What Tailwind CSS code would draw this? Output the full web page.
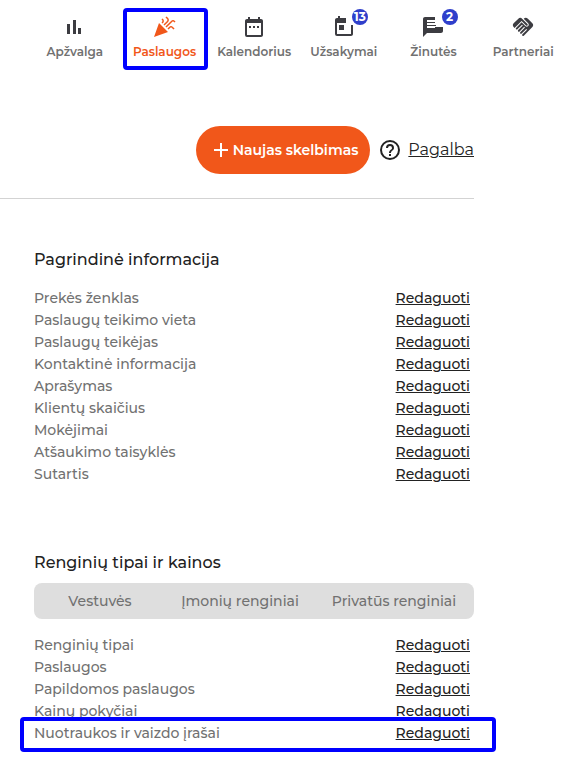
<!DOCTYPE html>
<html lang="lt">
<head>
    <meta charset="UTF-8">
    <meta name="viewport" content="width=device-width, initial-scale=1.0">
    <title>Paslaugos</title>
    <script src="https://cdn.jsdelivr.net/npm/@tailwindcss/browser@4"></script>
</head>
<body class="bg-white font-[Montserrat,Inter,sans-serif] text-[#222]">
    <!-- Navigation -->
    <nav class="grid grid-cols-6 pl-[30px] pt-[15px] text-xs leading-[18px] font-semibold text-[#717171]">
        <a href="#" class="flex flex-col items-center gap-1">
            <svg class="w-6 h-6 text-[#3c3c41]" viewBox="0 0 24 24" fill="currentColor"><path d="M4 9h3v10H4zM10 5h3v14h-3zM15 13h3v6h-3z"/></svg>
            Apžvalga
        </a>
        <a href="#" class="relative flex flex-col items-center gap-1 text-[#f1571a]">
            <span class="absolute -top-[7px] -bottom-[9px] left-[3px] right-px border-4 border-[#0000ff] rounded-sm"></span>
            <svg class="w-6 h-6" viewBox="0 0 24 24" fill="currentColor"><path d="M2 22l14-5-9-9zm12.530-9.470l5.590-5.590c.49-.49 1.280-.49 1.770 0l.59.59 1.060-1.060-.59-.59c-1.070-1.070-2.820-1.070-3.890 0l-5.590 5.590zm-4.470-5.650l-.59.59 1.060 1.060.59-.59c1.070-1.070 1.070-2.820 0-3.890l-.59-.59-1.060 1.070.59.59c.48.48.48 1.280 0 1.760m7 5l-1.590 1.590 1.060 1.060 1.590-1.590c.49-.49 1.280-.49 1.770 0l1.610 1.610 1.060-1.060-1.610-1.610c-1.080-1.070-2.820-1.070-3.890 0m-2-6l-3.590 3.590 1.060 1.060 3.590-3.590c1.070-1.070 1.070-2.820 0-3.890l-1.590-1.590-1.060 1.060 1.590 1.590c.48.49.48 1.290 0 1.770"/></svg>
            Paslaugos
        </a>
        <a href="#" class="flex flex-col items-center gap-1">
            <svg class="w-6 h-6 text-[#3c3c41]" viewBox="0 0 24 24" fill="currentColor"><path d="M7 11h2v2H7zm14-5v14c0 1.100-.9 2-2 2H5a2 2 0 0 1-2-2V6c0-1.100.9-2 2-2h1V2h2v2h8V2h2v2h1c1.100 0 2 .9 2 2M5 8v12h14V8zm10 5h2v-2h-2zm-4 0h2v-2h-2z"/></svg>
            Kalendorius
        </a>
        <a href="#" class="relative flex flex-col items-center gap-1">
            <svg class="w-6 h-6 text-[#3c3c41]" viewBox="0 0 24 24" fill="currentColor"><path d="M21 10v9c0 1.100-.9 2-2 2H5a2 2 0 0 1-2-2V5c0-1.100.9-2 2-2h1V1h2v2h6v5H5v11h14v-9zM7 10h5v5H7z"/></svg>
            <span class="absolute -top-[6px] left-[53px] w-4 h-4 rounded-full bg-[#2f3fcb] ring-2 ring-white text-xs leading-4 font-bold text-white text-center">13</span>
            Užsakymai
        </a>
        <a href="#" class="relative flex flex-col items-center gap-1">
            <svg class="w-6 h-6 text-[#3c3c41]" viewBox="0 0 24 24" fill="currentColor"><path d="M4 2h10v3H6v2h8v1H6v2h9v1H6v2h8v-1h8v4c0 1.100-.9 2-2 2H6l-4 4V4c0-1.100.9-2 2-2"/></svg>
            <span class="absolute -top-[6px] left-[53px] w-4 h-4 rounded-full bg-[#2f3fcb] ring-2 ring-white text-xs leading-4 font-bold text-white text-center">2</span>
            Žinutės
        </a>
        <a href="#" class="flex flex-col items-center gap-1">
            <svg class="w-6 h-6 text-[#3c3c41]" viewBox="0 0 24 24" fill="currentColor"><path d="M16.480 10.410c-.39.39-1.040.39-1.430 0l-4.470-4.460-7.050 7.040-.66-.63a3 3 0 0 1 0-4.240l4.240-4.240a3 3 0 0 1 4.240 0L16.480 9c.39.39.39 1.020 0 1.410m.7-2.130c.78.78.78 2.050 0 2.830-1.270 1.270-2.610.22-2.830 0l-3.760-3.760-5.570 5.570c-.39.39-.39 1.020 0 1.410s1.020.39 1.420 0l4.620-4.620.71.710-4.620 4.620c-.39.39-.39 1.020 0 1.410s1.020.39 1.420 0l4.620-4.620.71.710-4.620 4.620c-.39.39-.39 1.020 0 1.410s1.020.39 1.410 0l4.620-4.620.71.710-4.620 4.620c-.39.39-.39 1.020 0 1.410s1.020.39 1.410 0l8.320-8.340a3 3 0 0 0 0-4.240l-4.240-4.240a3 3 0 0 0-4.180-.06z"/></svg>
            Partneriai
        </a>
    </nav>

    <main class="pr-[94px] pt-[65px]">
        <div class="flex items-center justify-end pb-6 border-b border-[#d3d3d3]">
            <button type="button" class="flex items-center gap-0.5 h-12 pl-[15px] pr-3 rounded-full bg-[#f1571a] text-white text-sm font-semibold">
                <svg class="w-5 h-5" viewBox="0 0 20 20" fill="none" stroke="currentColor" stroke-width="2"><path d="M10 3v14M3 10h14"/></svg>
                Naujas skelbimas
            </button>
            <a href="#" class="flex items-center gap-2 ml-[10px] text-base underline">
                <svg class="w-5 h-5" viewBox="2 2 20 20" fill="currentColor"><path d="M11 18h2v-2h-2zm1-16a10 10 0 1 0 0 20 10 10 0 0 0 0-20m0 18a8 8 0 1 1 0-16 8 8 0 0 1 0 16m0-14a4 4 0 0 0-4 4h2a2 2 0 1 1 4 0c0 2-3 1.750-3 5h2c0-2.250 3-2.500 3-5a4 4 0 0 0-4-4"/></svg>
                Pagalba
            </a>
        </div>

        <section class="pl-[34px] pt-[49px]">
            <h2 class="mb-[15px] text-base leading-6 font-medium">Pagrindinė informacija</h2>
            <ul class="pr-1 text-sm leading-[22px] font-medium text-[#717171]">
                <li class="flex justify-between">Prekės ženklas <a href="#" class="text-[#222] underline">Redaguoti</a></li>
                <li class="flex justify-between">Paslaugų teikimo vieta <a href="#" class="text-[#222] underline">Redaguoti</a></li>
                <li class="flex justify-between">Paslaugų teikėjas <a href="#" class="text-[#222] underline">Redaguoti</a></li>
                <li class="flex justify-between">Kontaktinė informacija <a href="#" class="text-[#222] underline">Redaguoti</a></li>
                <li class="flex justify-between">Aprašymas <a href="#" class="text-[#222] underline">Redaguoti</a></li>
                <li class="flex justify-between">Klientų skaičius <a href="#" class="text-[#222] underline">Redaguoti</a></li>
                <li class="flex justify-between">Mokėjimai <a href="#" class="text-[#222] underline">Redaguoti</a></li>
                <li class="flex justify-between">Atšaukimo taisyklės <a href="#" class="text-[#222] underline">Redaguoti</a></li>
                <li class="flex justify-between">Sutartis <a href="#" class="text-[#222] underline">Redaguoti</a></li>
            </ul>
        </section>

        <section class="pl-[34px] pt-[66px] pb-6">
            <h2 class="mb-2 text-base leading-6 font-medium">Renginių tipai ir kainos</h2>
            <div class="grid grid-cols-[132fr_148fr_160fr] h-9 mb-[15px] rounded-lg bg-[#dedede] text-sm font-medium text-[#717171]">
                <button type="button">Vestuvės</button>
                <button type="button">Įmonių renginiai</button>
                <button type="button">Privatūs renginiai</button>
            </div>
            <ul class="pr-1 text-sm leading-[22px] font-medium text-[#717171]">
                <li class="flex justify-between">Renginių tipai <a href="#" class="text-[#222] underline">Redaguoti</a></li>
                <li class="flex justify-between">Paslaugos <a href="#" class="text-[#222] underline">Redaguoti</a></li>
                <li class="flex justify-between">Papildomos paslaugos <a href="#" class="text-[#222] underline">Redaguoti</a></li>
                <li class="flex justify-between">Kainų pokyčiai <a href="#" class="text-[#222] underline">Redaguoti</a></li>
                <li class="relative flex justify-between">
                    <span class="absolute -top-[5px] -bottom-[8px] -left-[14px] -right-[26px] border-4 border-[#0000ff] rounded-sm pointer-events-none"></span>
                    Nuotraukos ir vaizdo įrašai <a href="#" class="text-[#222] underline">Redaguoti</a>
                </li>
            </ul>
        </section>
    </main>
</body>
</html>
